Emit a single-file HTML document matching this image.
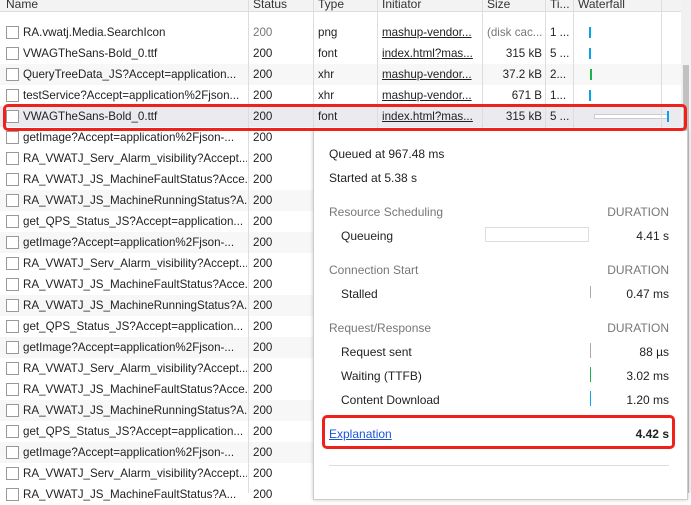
<!DOCTYPE html>
<html><head><style>
*{margin:0;padding:0;box-sizing:border-box}
body{width:691px;height:493px;overflow:hidden;background:#fff;font-family:"Liberation Sans",sans-serif;font-size:12px;color:#222;position:relative}
.hdr{position:absolute;left:0;top:0;width:691px;height:12px;background:#f3f3f3;border-bottom:1px solid #ddd;overflow:hidden}
.hdr span{position:absolute;top:-3px;color:#333}
.row{position:absolute;left:0;width:681px;height:21px;overflow:hidden;font-size:11.6px}
.row.g{background:#f7f7f7}
.row.sel{background:#ebeaef}
.c{position:absolute;top:4px;white-space:nowrap}
.n{width:224px;overflow:hidden}
.cb{position:absolute;left:6px;top:4px;width:13px;height:13px;border:1px solid #999;background:#fff}
.vl{position:absolute;top:0;width:1px;height:493px;background:#ddd}
.u{text-decoration:underline}
.pop{position:absolute;left:313px;top:130px;width:375px;height:370px;background:#fff;border:1px solid #ccc;box-shadow:0 0 4px rgba(0,0,0,.2)}
.pop div{position:absolute;white-space:nowrap}
.gr{color:#777}
.rb{position:absolute;border:3px solid #f0211b;border-radius:5px}
</style></head><body>
<div class="hdr"><span style="left:6px">Name</span><span style="left:253px">Status</span><span style="left:318px">Type</span><span style="left:382px">Initiator</span><span style="left:487px">Size</span><span style="left:550px">Ti...</span><span style="left:578px">Waterfall</span><span style="left:682px;font-size:9px;top:0">▲</span></div>
<div class="row" style="top:12px;height:10px"></div>

<div class="row" style="top:22px"><div class="cb"></div><div class="c n" style="left:23px">RA.vwatj.Media.SearchIcon</div><div class="c gr" style="left:253px">200</div><div class="c" style="left:318px">png</div><div class="c u" style="left:382px">mashup-vendor...</div><div class="c gr" style="left:487px">(disk cac...</div><div class="c" style="left:550px">1 ...</div><div style="position:absolute;left:589px;top:5px;width:2px;height:11px;background:#0aa2e8"></div></div>
<div class="row" style="top:43px"><div class="cb"></div><div class="c n" style="left:23px">VWAGTheSans-Bold_0.ttf</div><div class="c" style="left:253px">200</div><div class="c" style="left:318px">font</div><div class="c u" style="left:382px">index.html?mas...</div><div class="c" style="left:492px;width:50px;text-align:right">315 kB</div><div class="c" style="left:550px">5 ...</div><div style="position:absolute;left:589px;top:5px;width:2px;height:11px;background:#0aa2e8"></div></div>
<div class="row g" style="top:64px"><div class="cb"></div><div class="c n" style="left:23px">QueryTreeData_JS?Accept=application...</div><div class="c" style="left:253px">200</div><div class="c" style="left:318px">xhr</div><div class="c u" style="left:382px">mashup-vendor...</div><div class="c" style="left:492px;width:50px;text-align:right">37.2 kB</div><div class="c" style="left:550px">2...</div><div style="position:absolute;left:590px;top:5px;width:2px;height:11px;background:#1bb34a"></div></div>
<div class="row" style="top:85px"><div class="cb"></div><div class="c n" style="left:23px">testService?Accept=application%2Fjson...</div><div class="c" style="left:253px">200</div><div class="c" style="left:318px">xhr</div><div class="c u" style="left:382px">mashup-vendor...</div><div class="c" style="left:492px;width:50px;text-align:right">671 B</div><div class="c" style="left:550px">1...</div><div style="position:absolute;left:589px;top:5px;width:2px;height:11px;background:#0aa2e8"></div></div>
<div class="row sel" style="top:106px"><div class="cb"></div><div class="c n" style="left:23px">VWAGTheSans-Bold_0.ttf</div><div class="c" style="left:253px">200</div><div class="c" style="left:318px">font</div><div class="c u" style="left:382px">index.html?mas...</div><div class="c" style="left:492px;width:50px;text-align:right">315 kB</div><div class="c" style="left:550px">5 ...</div><div style="position:absolute;left:594px;top:8px;width:74px;height:5px;border:1px solid #ccc;background:#fff"></div><div style="position:absolute;left:667px;top:5px;width:2px;height:11px;background:#0aa2e8"></div></div>

<div class="row" style="top:127px"><div class="cb"></div><div class="c n" style="left:23px">getImage?Accept=application%2Fjson-...</div><div class="c" style="left:253px">200</div></div>
<div class="row" style="top:148px"><div class="cb"></div><div class="c n" style="left:23px">RA_VWATJ_Serv_Alarm_visibility?Accept...</div><div class="c" style="left:253px">200</div></div>
<div class="row" style="top:169px"><div class="cb"></div><div class="c n" style="left:23px">RA_VWATJ_JS_MachineFaultStatus?Acce...</div><div class="c" style="left:253px">200</div></div>
<div class="row g" style="top:190px"><div class="cb"></div><div class="c n" style="left:23px">RA_VWATJ_JS_MachineRunningStatus?A...</div><div class="c" style="left:253px">200</div></div>
<div class="row" style="top:211px"><div class="cb"></div><div class="c n" style="left:23px">get_QPS_Status_JS?Accept=application...</div><div class="c" style="left:253px">200</div></div>
<div class="row g" style="top:232px"><div class="cb"></div><div class="c n" style="left:23px">getImage?Accept=application%2Fjson-...</div><div class="c" style="left:253px">200</div></div>
<div class="row" style="top:253px"><div class="cb"></div><div class="c n" style="left:23px">RA_VWATJ_Serv_Alarm_visibility?Accept...</div><div class="c" style="left:253px">200</div></div>
<div class="row" style="top:274px"><div class="cb"></div><div class="c n" style="left:23px">RA_VWATJ_JS_MachineFaultStatus?Acce...</div><div class="c" style="left:253px">200</div></div>
<div class="row g" style="top:295px"><div class="cb"></div><div class="c n" style="left:23px">RA_VWATJ_JS_MachineRunningStatus?A...</div><div class="c" style="left:253px">200</div></div>
<div class="row" style="top:316px"><div class="cb"></div><div class="c n" style="left:23px">get_QPS_Status_JS?Accept=application...</div><div class="c" style="left:253px">200</div></div>
<div class="row g" style="top:337px"><div class="cb"></div><div class="c n" style="left:23px">getImage?Accept=application%2Fjson-...</div><div class="c" style="left:253px">200</div></div>
<div class="row" style="top:358px"><div class="cb"></div><div class="c n" style="left:23px">RA_VWATJ_Serv_Alarm_visibility?Accept...</div><div class="c" style="left:253px">200</div></div>
<div class="row" style="top:379px"><div class="cb"></div><div class="c n" style="left:23px">RA_VWATJ_JS_MachineFaultStatus?Acce...</div><div class="c" style="left:253px">200</div></div>
<div class="row g" style="top:400px"><div class="cb"></div><div class="c n" style="left:23px">RA_VWATJ_JS_MachineRunningStatus?A...</div><div class="c" style="left:253px">200</div></div>
<div class="row" style="top:421px"><div class="cb"></div><div class="c n" style="left:23px">get_QPS_Status_JS?Accept=application...</div><div class="c" style="left:253px">200</div></div>
<div class="row g" style="top:442px"><div class="cb"></div><div class="c n" style="left:23px">getImage?Accept=application%2Fjson-...</div><div class="c" style="left:253px">200</div></div>
<div class="row" style="top:463px"><div class="cb"></div><div class="c n" style="left:23px">RA_VWATJ_Serv_Alarm_visibility?Accept...</div><div class="c" style="left:253px">200</div></div>
<div class="row" style="top:484px"><div class="cb"></div><div class="c n" style="left:23px">RA_VWATJ_JS_MachineFaultStatus?A...</div><div class="c" style="left:253px">200</div></div>

<div class="vl" style="left:248px"></div>
<div class="vl" style="left:313px;height:130px"></div>
<div class="vl" style="left:377px;height:130px"></div>
<div class="vl" style="left:482px;height:130px"></div>
<div class="vl" style="left:545px;height:130px"></div>
<div class="vl" style="left:573px;height:130px"></div>
<div class="vl" style="left:661px;height:130px"></div>
<div style="position:absolute;left:681px;top:0;width:10px;height:493px;background:#f1f1f1"></div>
<div style="position:absolute;left:683px;top:65px;width:6px;height:428px;background:#c1c1c1"></div>

<div class="pop">
<div style="left:15px;top:16px">Queued at 967.48 ms</div>
<div style="left:15px;top:40px">Started at 5.38 s</div>
<div class="gr" style="left:15px;top:74px">Resource Scheduling</div><div class="gr" style="right:18px;top:74px">DURATION</div>
<div style="left:27px;top:98px">Queueing</div><div style="left:171px;top:96px;width:104px;height:15px;border:1px solid #ddd"></div><div style="right:18px;top:98px">4.41 s</div>
<div class="gr" style="left:15px;top:132px">Connection Start</div><div class="gr" style="right:18px;top:132px">DURATION</div>
<div style="left:27px;top:156px">Stalled</div><div style="left:276px;top:155px;width:1px;height:12px;background:#aaa"></div><div style="right:18px;top:156px">0.47 ms</div>
<div class="gr" style="left:15px;top:190px">Request/Response</div><div class="gr" style="right:18px;top:190px">DURATION</div>
<div style="left:27px;top:214px">Request sent</div><div style="left:276px;top:212px;width:1px;height:15px;background:#aaa"></div><div style="right:18px;top:214px">88 µs</div>
<div style="left:27px;top:238px">Waiting (TTFB)</div><div style="left:276px;top:236px;width:1px;height:15px;background:#1bb34a"></div><div style="right:18px;top:238px">3.02 ms</div>
<div style="left:27px;top:262px">Content Download</div><div style="left:276px;top:260px;width:1px;height:15px;background:#0aa2e8"></div><div style="right:18px;top:262px">1.20 ms</div>
<div class="u" style="left:15px;top:296px;color:#1a55d8">Explanation</div><div style="right:18px;top:296px;font-weight:bold">4.42 s</div>
<div style="left:15px;top:334px;width:340px;height:1px;background:#ddd"></div>
</div>

<div class="rb" style="left:3px;top:104px;width:684px;height:27px"></div>
<div class="rb" style="left:322px;top:415px;width:353px;height:34px"></div>
</body></html>
